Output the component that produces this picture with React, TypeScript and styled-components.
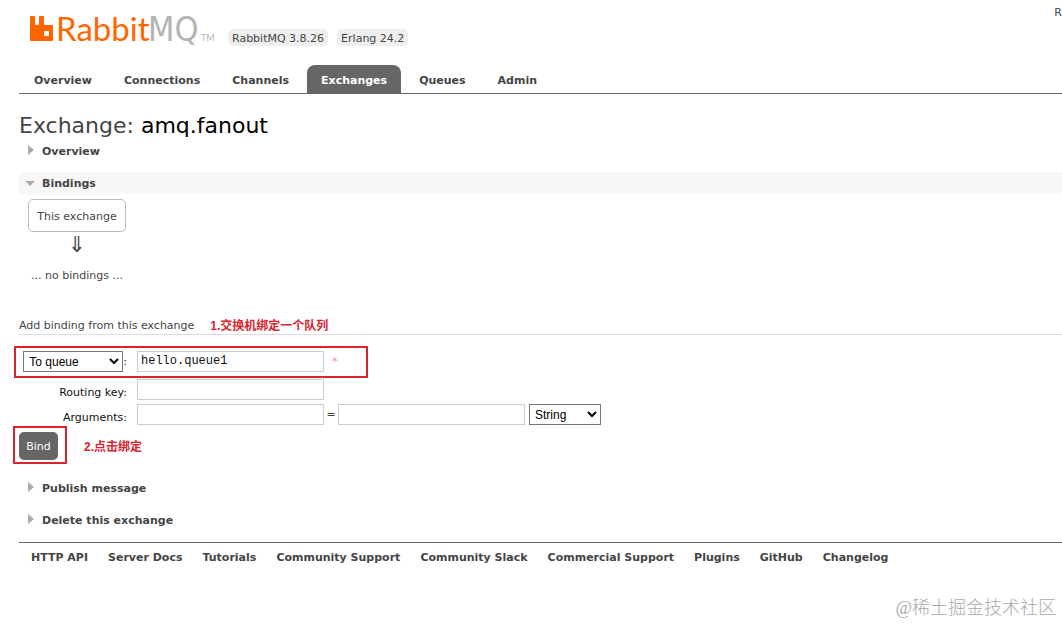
import React from "react";
import styled, { createGlobalStyle } from "styled-components";

const GlobalStyle = createGlobalStyle`
  *, *::after { box-sizing: border-box; }
  body {
    margin: 0;
    background: #fff;
    color: #444;
    font: 11px/16px Verdana, "DejaVu Sans", "Noto Sans CJK SC", sans-serif;
    overflow-x: hidden;
  }
`;

const Page = styled.div`
  position: relative;
  min-height: 100vh;
  padding-left: 19px;
`;

const Header = styled.header`
  display: flex;
  align-items: flex-start;
  height: 65px;
`;

const Logo = styled.a`
  display: flex;
  margin: 8px 11px 0 11px;
  width: 187px;
  height: 44px;
  text-decoration: none;
`;

const Versions = styled.ul`
  display: flex;
  gap: 9px;
  margin: 29px 0 0;
  padding: 0;
  list-style: none;
`;

const Version = styled.li`
  padding: 2px 4px 0;
  line-height: 15px;
  border-radius: 5px;
  background: #eee;
`;

const Status = styled.span`
  margin: 5px 0 0 auto;
`;

const Tabs = styled.nav`
  display: flex;
  gap: 4px;
  padding-left: 1px;
  border-bottom: 1px solid #666;
`;

const Tab = styled.a<{ $active?: boolean }>`
  padding: 3px 14px 0;
  line-height: 25px;
  font-weight: bold;
  text-decoration: none;
  border-radius: 8px 8px 0 0;
  color: ${(p) => (p.$active ? "#fff" : "#444")};
  background: ${(p) => (p.$active ? "#666" : "transparent")};
`;

const Title = styled.h1`
  margin: 18px 0 0;
  font-size: 22px;
  line-height: 28px;
  font-weight: normal;

  b {
    font-weight: normal;
    color: #000;
  }
`;

const SectionHead = styled.h2<{ $open?: boolean }>`
  margin: 0 0 10px;
  background: ${(p) => (p.$open ? "#f7f7f7" : "transparent")};
  font-size: 11px;
  line-height: 22px;

  button {
    display: flex;
    align-items: center;
    gap: 6px;
    height: 22px;
    padding: 0 0 0 6px;
    border: 0;
    background: none;
    color: inherit;
    font: inherit;
  }

  span {
    padding-top: 2px;
  }
`;

const Bindings = styled.div`
  display: flex;
  flex-direction: column;
  align-items: center;
  width: 98px;
  margin: -5px 0 34px 9px;
  white-space: nowrap;
`;

const Node = styled.div`
  width: 100%;
  padding-top: 2px;
  border: 1px solid #bbb;
  border-radius: 5px;
  line-height: 29px;
  text-align: center;
`;

const Arrow = styled.div`
  font-size: 22px;
  line-height: 26px;
`;

const Empty = styled.p`
  margin: 10px 0 0;
`;

const FormHead = styled.h3`
  display: flex;
  gap: 16px;
  margin: 0 0 16px;
  border-bottom: 1px solid #ddd;
  font-size: 11px;
  font-weight: normal;
`;

const Note = styled.strong`
  color: #d9232e;
  font: bold 12px/16px "Liberation Sans", "Noto Sans CJK SC", sans-serif;
`;

const Row = styled.div<{ $marked?: boolean }>`
  position: relative;
  display: grid;
  grid-template-columns: 108px 1fr;
  column-gap: 10px;
  margin-bottom: ${(p) => (p.$marked ? "7px" : "4px")};

  &::after {
    content: "";
    display: ${(p) => (p.$marked ? "block" : "none")};
    position: absolute;
    inset: -5px auto -6px -5px;
    width: 354px;
    border: 2px solid #d9232e;
    pointer-events: none;
  }
`;

const LabelCell = styled.div`
  display: flex;
  justify-content: flex-end;
  align-items: center;
  color: #111;

  > label {
    align-self: flex-end;
    line-height: 14px;
  }
`;

const Fields = styled.div`
  display: flex;
  align-items: center;
  gap: 4px;
`;

const TextInput = styled.input`
  width: 187px;
  height: 21px;
  padding: 0 3px 2px;
  border: 1px solid #ccc;
  background: #fff;
  color: #111;
  font: 12px "Liberation Mono", monospace;
`;

const Equals = styled.span`
  width: 6px;
  display: flex;
  justify-content: center;
`;

const Required = styled.span`
  margin-left: 4px;
  color: #f58a94;
`;

const Select = styled.select<{ $wide?: boolean }>`
  width: ${(p) => (p.$wide ? "100px" : "72px")};
  height: 21px;
  padding: 0 1px;
  border: 1px solid #767676;
  border-radius: 0;
  background: #fff;
  color: #000;
  font: 12px "Liberation Sans", sans-serif;
`;

const Actions = styled.div`
  display: flex;
  align-items: center;
  gap: 26px;
  margin: 7px 0 17px;
  line-height: 16px;

  > strong {
    padding-top: 2px;
  }
`;

const Marker = styled.div`
  position: relative;

  &::after {
    content: "";
    position: absolute;
    inset: -6px -9px -4px -6px;
    border: 2px solid #d9232e;
    pointer-events: none;
  }
`;

const BindButton = styled.button`
  display: block;
  width: 39px;
  height: 28px;
  padding: 2px 0 0;
  border: 0;
  border-radius: 5px;
  background: #666;
  color: #fff;
  font: inherit;
`;

const Footer = styled.footer`
  display: flex;
  gap: 20px;
  margin-top: 11px;
  padding: 7px 0 0 12px;
  border-top: 1px solid #666;

  a {
    color: #444;
    font-weight: bold;
    text-decoration: none;
    white-space: nowrap;
  }
`;

const Watermark = styled.div`
  position: absolute;
  right: 6px;
  bottom: 3px;
  color: #aaa;
  font: 300 18px/26px "Liberation Serif", "Noto Sans CJK SC", serif;
`;

const RabbitLogo = () => (
  <svg width="187" height="44" viewBox="0 0 187 44" role="img" aria-label="RabbitMQ">
    <path
      fill="#f60"
      fillRule="evenodd"
      d="M1 8H4Q5 8 5 9V16Q5 17 6 17H8Q9 17 9 16V9Q9 8 10 8H13Q14 8 14 9V16Q14 17 15 17H22Q23 17 23 18V32Q23 33 22 33H1Q0 33 0 32V9Q0 8 1 8ZM15 23Q14 23 14 24V27Q14 28 15 28H18Q19 28 19 27V24Q19 23 18 23Z"
    />
    <text x="26" y="33" fontSize="33" fontFamily="Lato, sans-serif" fill="#f60">Rabbit</text>
    <text x="118" y="33" fontSize="34" fontFamily="'DejaVu Sans Condensed', 'DejaVu Sans', sans-serif" fill="#b4b4b4">MQ</text>
    <text x="171" y="33" fontSize="9" fontFamily="Lato, sans-serif" fill="#b4b4b4">TM</text>
  </svg>
);

const Triangle = ({ open }: { open?: boolean }) => (
  <svg width="11" height="12" viewBox="0 0 11 12" aria-hidden="true">
    <path fill="#aaa" d={open ? "M0 4H10L5 9Z" : "M3 0L9 5L3 10Z"} />
  </svg>
);

const Section = ({ title, open }: { title: string; open?: boolean }) => (
  <SectionHead $open={open}>
    <button type="button" aria-expanded={!!open}>
      <Triangle open={open} />
      <span>{title}</span>
    </button>
  </SectionHead>
);

const tabs = ["Overview", "Connections", "Channels", "Exchanges", "Queues", "Admin"];
const links = [
  "HTTP API", "Server Docs", "Tutorials", "Community Support", "Community Slack",
  "Commercial Support", "Plugins", "GitHub", "Changelog",
];

export default function App() {
  return (
    <Page>
      <GlobalStyle />
      <Header>
        <Logo href="#"><RabbitLogo /></Logo>
        <Versions>
          <Version>RabbitMQ 3.8.26</Version>
          <Version>Erlang 24.2</Version>
        </Versions>
        <Status>R</Status>
      </Header>
      <Tabs>
        {tabs.map((t) => (
          <Tab key={t} href="#" $active={t === "Exchanges"}>{t}</Tab>
        ))}
      </Tabs>
      <main>
        <Title>Exchange: <b>amq.fanout</b></Title>
        <Section title="Overview" />
        <Section title="Bindings" open />
        <Bindings>
          <Node>This exchange</Node>
          <Arrow>⇓</Arrow>
          <Empty>... no bindings ...</Empty>
        </Bindings>
        <FormHead>
          Add binding from this exchange
          <Note>1.交换机绑定一个队列</Note>
        </FormHead>
        <form onSubmit={(e) => e.preventDefault()}>
          <Row $marked>
            <LabelCell>
              <Select $wide aria-label="Destination type">
                <option>To queue</option>
                <option>To exchange</option>
              </Select>
              <span>:</span>
            </LabelCell>
            <Fields>
              <TextInput aria-label="Destination" defaultValue="hello.queue1" required />
              <Required>*</Required>
            </Fields>
          </Row>
          <Row>
            <LabelCell><label htmlFor="routing">Routing key:</label></LabelCell>
            <Fields><TextInput id="routing" /></Fields>
          </Row>
          <Row>
            <LabelCell><label htmlFor="argument">Arguments:</label></LabelCell>
            <Fields>
              <TextInput id="argument" />
              <Equals>=</Equals>
              <TextInput aria-label="Argument value" />
              <Select aria-label="Argument type">
                <option>String</option>
                <option>Number</option>
                <option>Boolean</option>
              </Select>
            </Fields>
          </Row>
          <Actions>
            <Marker><BindButton type="submit">Bind</BindButton></Marker>
            <Note>2.点击绑定</Note>
          </Actions>
        </form>
        <Section title="Publish message" />
        <Section title="Delete this exchange" />
      </main>
      <Footer>
        {links.map((l) => <a key={l} href="#">{l}</a>)}
      </Footer>
      <Watermark>@稀土掘金技术社区</Watermark>
    </Page>
  );
}
